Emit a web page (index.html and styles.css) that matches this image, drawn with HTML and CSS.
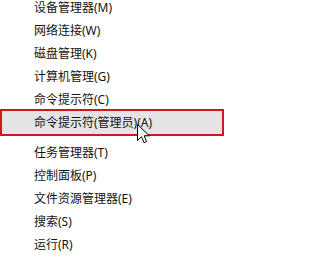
FILE: index.html
```html
<!DOCTYPE html>
<html lang="zh-CN">
<head>
<meta charset="utf-8">
<link rel="stylesheet" href="styles.css">
</head>
<body>
<div class="menu">
  <ul class="group">
    <li class="item">设备管理器(M)</li>
    <li class="item">网络连接(W)</li>
    <li class="item">磁盘管理(K)</li>
    <li class="item">计算机管理(G)</li>
    <li class="item">命令提示符(C)</li>
    <li class="item item-active">命令提示符(管理员)(A)</li>
  </ul>
  <ul class="group group-next">
    <li class="item">任务管理器(T)</li>
    <li class="item">控制面板(P)</li>
    <li class="item">文件资源管理器(E)</li>
    <li class="item">搜索(S)</li>
    <li class="item">运行(R)</li>
  </ul>
</div>
<svg class="cursor" width="13" height="21" viewBox="0 0 13 21" xmlns="http://www.w3.org/2000/svg">
  <path d="M0.5 0.5 L0.5 16.5 L4.5 12.7 L7 18.7 L9.6 17.6 L7.2 11.8 L12.3 11.8 Z" fill="#fff" stroke="#000" stroke-width="1" stroke-linejoin="miter"/>
</svg>
</body>
</html>
```

FILE: styles.css
```css
html, body {
  margin: 0;
  padding: 0;
  background: #ffffff;
}
body {
  width: 228px;
  height: 258px;
  overflow: hidden;
  position: relative;
  font-family: "Noto Sans", "Noto Sans CJK SC", sans-serif;
  font-size: 12px;
  color: #141414;
}
.menu {
  margin: -4px 0 0 2px;
  width: 220px;
}
.group {
  list-style: none;
  margin: 0;
  padding: 0;
}
.group-next {
  margin-top: 7px;
}
.item {
  height: 23px;
  line-height: 23px;
  padding-left: 32px;
  white-space: nowrap;
}
.item-active {
  background: #e4e4e4;
  outline: 2px solid #d2161e;
}
.cursor {
  position: absolute;
  left: 137px;
  top: 124px;
}
```
